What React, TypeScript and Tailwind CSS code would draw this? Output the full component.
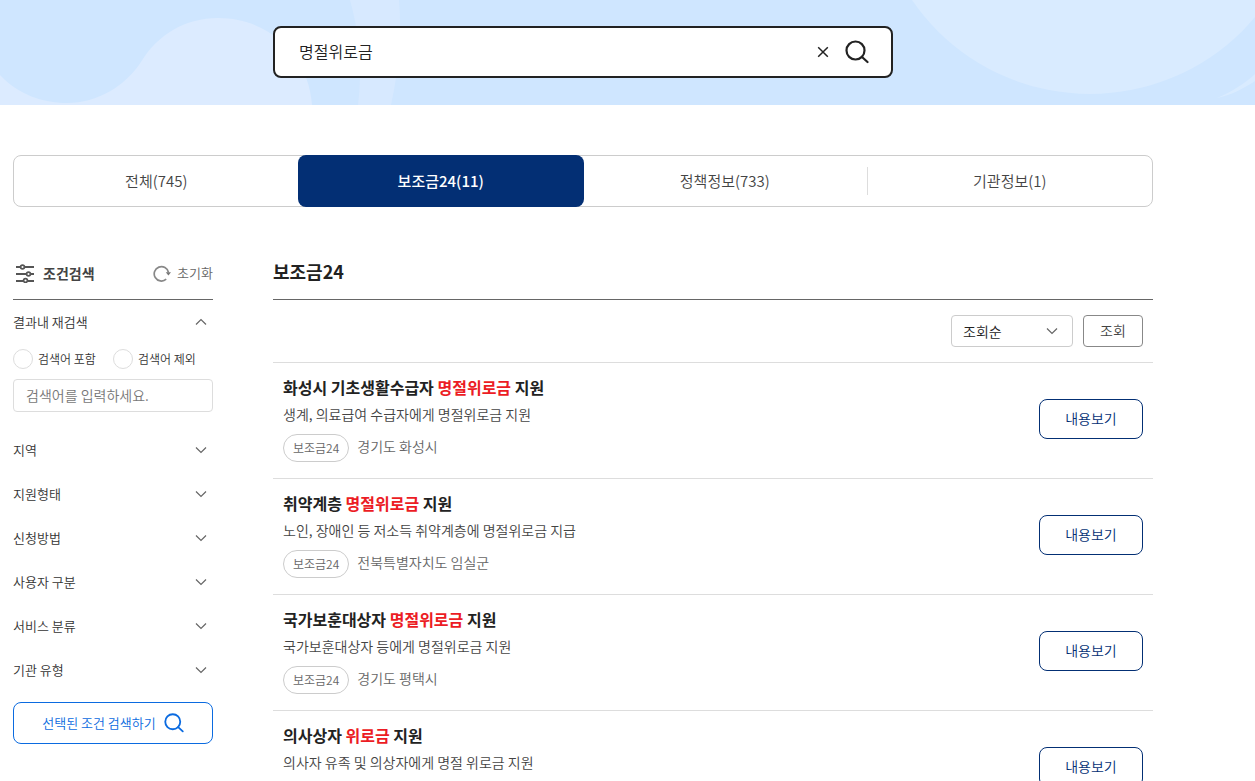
import { useState } from 'react'

const tabs = [
  { id: 'all', label: '전체', count: 745 },
  { id: 'subsidy', label: '보조금24', count: 11 },
  { id: 'policy', label: '정책정보', count: 733 },
  { id: 'agency', label: '기관정보', count: 1 },
]

const filters = ['지역', '지원형태', '신청방법', '사용자 구분', '서비스 분류', '기관 유형']

const results = [
  {
    before: '화성시 기초생활수급자 ',
    keyword: '명절위로금',
    after: ' 지원',
    description: '생계, 의료급여 수급자에게 명절위로금 지원',
    region: '경기도 화성시',
  },
  {
    before: '취약계층 ',
    keyword: '명절위로금',
    after: ' 지원',
    description: '노인, 장애인 등 저소득 취약계층에 명절위로금 지급',
    region: '전북특별자치도 임실군',
  },
  {
    before: '국가보훈대상자 ',
    keyword: '명절위로금',
    after: ' 지원',
    description: '국가보훈대상자 등에게 명절위로금 지원',
    region: '경기도 평택시',
  },
  {
    before: '의사상자 ',
    keyword: '위로금',
    after: ' 지원',
    description: '의사자 유족 및 의상자에게 명절 위로금 지원',
    region: '경기도',
  },
]

function SearchIcon({ className }: { className: string }) {
  return (
    <svg viewBox="0 0 24 24" fill="none" stroke="currentColor" strokeWidth="2.2" strokeLinecap="round" className={className}>
      <circle cx="10.5" cy="10.5" r="9" />
      <path d="M17 17l5.500 5" />
    </svg>
  )
}

function Chevron({ className = '' }: { className?: string }) {
  return (
    <svg viewBox="0 0 12 8" fill="none" stroke="#666" strokeWidth="1.2" className={`h-2 w-3 ${className}`}>
      <path d="M1 1.5l5 5 5-5" />
    </svg>
  )
}

function FilterIcon() {
  return (
    <svg viewBox="0 0 20 20" fill="none" stroke="#555" className="h-5 w-5">
      <path d="M1 4h4.500M10 4h9M1 11h10.500M16 11h3M1 18h7.500M13 18h6" strokeWidth="2" />
      <circle cx="7.500" cy="4" r="1.900" strokeWidth="1.700" />
      <circle cx="13.500" cy="11" r="1.900" strokeWidth="1.700" />
      <circle cx="10.500" cy="17.500" r="1.900" strokeWidth="1.700" />
    </svg>
  )
}

function ResetIcon() {
  return (
    <svg viewBox="0 0 18 18" className="h-[18px] w-[18px]">
      <path d="M13.200 15.200A7.200 7.200 0 1 1 15.500 8.500" fill="none" stroke="#888" strokeWidth="1.700" />
      <path d="M12.800 8.200h5.200L15.400 11.600z" fill="#777" />
    </svg>
  )
}

function Banner() {
  const [query, setQuery] = useState('명절위로금')

  return (
    <header className="relative overflow-hidden bg-[#cfe6ff] px-[13px] pt-[26px] pb-[27px]">
      <svg
        viewBox="0 0 1255 105"
        preserveAspectRatio="xMidYMid slice"
        className="absolute inset-0 h-full w-full"
        aria-hidden="true"
      >
        <path
          d="M0 75C18 94 42 103 67 103c31 0 58-17 74-41C158 34 186 18 218 18c52 0 91 39 94 87H0z"
          fill="#dcebff"
        />
        <path d="M350 0c9 32 13 68 8 105h33c8-36 11-72 8-105z" fill="#d7e9ff" />
        <circle cx="1090" cy="-121.500" r="215.500" fill="#d9ebff" />
        <path d="M1217 98c14-6 27-14 38-24v7c-12 8-24 14-38 17z" fill="#d9ebff" />
      </svg>
      <div className="max-w-[1140px]">
        <form
          role="search"
          onSubmit={(e) => e.preventDefault()}
          className="relative mx-auto flex h-[52px] max-w-[620px] items-center rounded-lg border-2 border-[#222] bg-white pr-[22px] pl-6 text-[#222]"
        >
          <input
            type="text"
            aria-label="검색어"
            value={query}
            onChange={(e) => setQuery(e.target.value)}
            className="h-full min-w-0 flex-1 pb-0.5 text-base outline-none"
          />
          <button type="button" aria-label="지우기" onClick={() => setQuery('')} className="mr-4">
            <svg viewBox="0 0 12 12" stroke="currentColor" strokeWidth="1.5" className="h-3 w-3">
              <path d="M1.200 1.200l9.600 9.600M10.800 1.200l-9.600 9.600" />
            </svg>
          </button>
          <button type="submit" aria-label="검색">
            <SearchIcon className="h-6 w-6" />
          </button>
        </form>
      </div>
    </header>
  )
}

function ResultTabs() {
  const [active, setActive] = useState('subsidy')

  return (
    <nav className="mt-[50px] grid h-[52px] grid-cols-4 rounded-lg border border-[#ccc]">
      {tabs.map((tab) =>
        tab.id === active ? (
          <button key={tab.id} type="button" aria-current="page" className="-m-px rounded-lg bg-[#032f74] text-[15px] font-medium text-white">
            {tab.label}({tab.count})
          </button>
        ) : (
          <button
            key={tab.id}
            type="button"
            onClick={() => setActive(tab.id)}
            className="flex items-center text-[15px] text-[#444]"
          >
            <span className="flex-1">
              {tab.label}({tab.count})
            </span>
            {tab.id === 'policy' && <span className="h-7 w-px bg-[#ddd]" />}
          </button>
        ),
      )}
    </nav>
  )
}

function Sidebar() {
  return (
    <aside className="w-[200px] shrink-0 text-[13px] text-[#333]">
      <div className="flex h-[53px] items-center justify-between border-b border-[#666]">
        <h2 className="flex items-center gap-2 pl-0.5 text-sm font-bold text-[#444]">
          <FilterIcon />
          조건검색
        </h2>
        <button type="button" className="flex items-center gap-1.5 text-[#666]">
          <ResetIcon />
          초기화
        </button>
      </div>

      <button type="button" aria-expanded="true" className="flex h-11 w-full items-center justify-between pr-1.5">
        결과내 재검색
        <Chevron className="rotate-180" />
      </button>
      <div className="mt-[5px] grid h-5 grid-cols-2 text-xs">
        <label className="flex items-center gap-[5px]">
          <input type="radio" name="within" className="h-5 w-5 appearance-none rounded-full border border-[#ddd] checked:border-4 checked:border-[#0b6be0]" />
          검색어 포함
        </label>
        <label className="flex items-center gap-[5px]">
          <input type="radio" name="within" className="h-5 w-5 appearance-none rounded-full border border-[#ddd] checked:border-4 checked:border-[#0b6be0]" />
          검색어 제외
        </label>
      </div>
      <input
        type="text"
        aria-label="결과내 검색어"
        placeholder="검색어를 입력하세요."
        className="mt-2.5 block h-[33px] w-full rounded border border-[#ddd] px-3 pb-0.5 text-sm placeholder:text-[#777]"
      />

      <ul className="mt-4">
        {filters.map((filter) => (
          <li key={filter}>
            <button type="button" aria-expanded="false" className="flex h-11 w-full items-center justify-between pr-1.5">
              {filter}
              <Chevron />
            </button>
          </li>
        ))}
      </ul>

      <button
        type="button"
        className="mt-2.5 flex h-[42px] w-full items-center justify-center gap-2 rounded-lg border border-[#0b6be0] text-[#0b6be0]"
      >
        선택된 조건 검색하기
        <SearchIcon className="h-5 w-5" />
      </button>
    </aside>
  )
}

function ResultList() {
  return (
    <main className="min-w-0 flex-1">
      <h1 className="flex h-[53px] items-center border-b border-[#666] pb-1 text-lg font-bold text-[#222]">보조금24</h1>

      <div className="flex justify-end gap-2.5 border-b border-[#ddd] px-2.5 py-[15px] text-sm">
        <div className="relative">
          <select
            aria-label="정렬"
            className="h-8 w-[122px] appearance-none rounded border border-[#ccc] bg-white pl-[11px] text-[#222]"
          >
            <option>조회순</option>
            <option>정확도순</option>
            <option>최신순</option>
          </select>
          <Chevron className="pointer-events-none absolute top-3 right-[15px]" />
        </div>
        <button type="button" className="h-8 w-[60px] rounded border border-[#888] pb-0.5 text-[#444]">
          조회
        </button>
      </div>

      <ul>
        {results.map((item) => (
          <li
            key={item.description}
            className="flex items-center justify-between border-b border-[#ddd] px-2.5 pt-3 pb-4"
          >
            <div>
              <h3 className="text-base leading-6 font-bold text-[#222]">
                {item.before}
                <span className="text-[#ec1c24]">{item.keyword}</span>
                {item.after}
              </h3>
              <p className="mt-[3px] text-sm leading-6 text-[#444]">{item.description}</p>
              <div className="mt-2 flex gap-2 text-[#666]">
                <span className="flex h-7 items-center rounded-full border border-[#ccc] px-[9px] pb-px text-xs">보조금24</span>
                <span className="text-sm leading-6">{item.region}</span>
              </div>
            </div>
            <a
              href="#detail"
              className="flex h-10 w-[104px] items-center justify-center rounded-lg border border-[#032f74] pb-0.5 text-sm text-[#032f74]"
            >
              내용보기
            </a>
          </li>
        ))}
      </ul>
    </main>
  )
}

export default function App() {
  return (
    <div className="min-h-screen bg-white font-['Noto_Sans_CJK_KR',sans-serif] font-[350]">
      <Banner />
      <div className="px-[13px]">
        <div className="max-w-[1140px]">
          <ResultTabs />
          <div className="mt-10 flex gap-[60px]">
            <Sidebar />
            <ResultList />
          </div>
        </div>
      </div>
    </div>
  )
}
